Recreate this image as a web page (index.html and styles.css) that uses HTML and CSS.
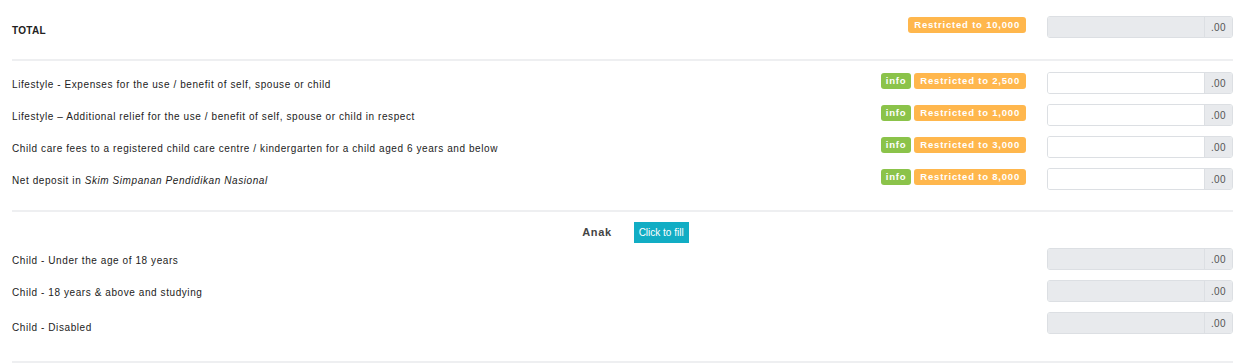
FILE: index.html
```html
<!doctype html>
<html lang="en">
  <head>
    <meta charset="UTF-8" />
    <title>Relief</title>
    <link rel="stylesheet" href="styles.css">
  </head>
  <body>
    <div class="form">
      <div class="row total-row">
        <div class="label total">TOTAL</div>
        <div class="badges"><span class="badge warn">Restricted to 10,000</span></div>
        <div class="amount readonly"><span class="field"></span><span class="addon">.00</span></div>
      </div>

      <hr class="divider first">

      <div class="row">
        <div class="label">Lifestyle - Expenses for the use / benefit of self, spouse or child</div>
        <div class="badges"><span class="badge ok">info</span><span class="badge warn">Restricted to 2,500</span></div>
        <div class="amount"><span class="field"></span><span class="addon">.00</span></div>
      </div>
      <div class="row">
        <div class="label">Lifestyle – Additional relief for the use / benefit of self, spouse or child in respect</div>
        <div class="badges"><span class="badge ok">info</span><span class="badge warn">Restricted to 1,000</span></div>
        <div class="amount"><span class="field"></span><span class="addon">.00</span></div>
      </div>
      <div class="row">
        <div class="label">Child care fees to a registered child care centre / kindergarten for a child aged 6 years and below</div>
        <div class="badges"><span class="badge ok">info</span><span class="badge warn">Restricted to 3,000</span></div>
        <div class="amount"><span class="field"></span><span class="addon">.00</span></div>
      </div>
      <div class="row">
        <div class="label">Net deposit in <em>Skim Simpanan Pendidikan Nasional</em></div>
        <div class="badges"><span class="badge ok">info</span><span class="badge warn">Restricted to 8,000</span></div>
        <div class="amount"><span class="field"></span><span class="addon">.00</span></div>
      </div>

      <hr class="divider mid">

      <div class="group-head">
        <span class="group-title">Anak</span>
        <button class="fill-btn">Click to fill</button>
      </div>

      <div class="row child">
        <div class="label">Child - Under the age of 18 years</div>
        <div class="badges"></div>
        <div class="amount readonly"><span class="field"></span><span class="addon">.00</span></div>
      </div>
      <div class="row child">
        <div class="label">Child - 18 years &amp; above and studying</div>
        <div class="badges"></div>
        <div class="amount readonly"><span class="field"></span><span class="addon">.00</span></div>
      </div>
      <div class="row child last">
        <div class="label">Child - Disabled</div>
        <div class="badges"></div>
        <div class="amount readonly"><span class="field"></span><span class="addon">.00</span></div>
      </div>

      <hr class="divider">
    </div>
  </body>
</html>
```

FILE: styles.css
```css
body {
  margin: 0;
  font-family: "Liberation Sans", Arial, sans-serif;
  font-size: 10px;
  color: #222;
  background: #fff;
}
.form {
  width: 1221px;
  padding: 16px 0 0 12px;
}
.row {
  display: grid;
  grid-template-columns: 1fr auto 186px;
  column-gap: 21px;
  align-items: center;
  height: 22px;
  margin-bottom: 10px;
}
.total-row {
  margin-bottom: 0;
}
.label {
  letter-spacing: 0.58px;
  white-space: nowrap;
  padding-top: 2px;
}
.total {
  font-weight: bold;
  letter-spacing: 0.3px;
  padding-top: 6px;
}
.badges {
  display: flex;
  gap: 3px;
  align-self: start;
  padding-top: 1px;
}
.badge {
  display: inline-block;
  height: 16px;
  line-height: 16px;
  padding: 0 6px;
  border-radius: 3px;
  color: #fff;
  font-weight: bold;
  font-size: 9.5px;
  letter-spacing: 0.8px;
}
.badge.warn {
  background: #ffb74d;
}
.badge.ok {
  background: #8bc34a;
  padding: 0 5px;
}
.amount {
  display: flex;
  height: 22px;
  border: 1px solid #dcdfe3;
  border-radius: 3px;
  box-sizing: border-box;
  overflow: hidden;
}
.field {
  flex: 1;
  background: #fff;
}
.amount.readonly .field {
  background: #e8eaed;
}
.addon {
  width: 27px;
  border-left: 1px solid #dcdfe3;
  background: #e8eaed;
  color: #555;
  font-size: 10px;
  letter-spacing: 0.4px;
  text-align: center;
  line-height: 21px;
}
.divider {
  border: 0;
  height: 2px;
  background: #eeeff1;
  margin: 0 0 10px 0;
}
.divider.first {
  margin-top: 21px;
  margin-bottom: 11px;
}
.divider.mid {
  margin-top: 20px;
  margin-bottom: 10px;
}
.group-head {
  display: flex;
  justify-content: center;
  align-items: flex-start;
  gap: 22px;
  height: 26px;
  padding-left: 26px;
}
.group-title {
  font-weight: bold;
  font-size: 11px;
  color: #444;
  letter-spacing: 0.6px;
  padding-top: 4px;
}
.fill-btn {
  height: 21px;
  padding: 0 5px;
  border: 0;
  background: #11adc4;
  color: #fff;
  font-family: "Liberation Sans", Arial, sans-serif;
  font-size: 10px;
}
.row.child.last {
  margin-top: 1px;
  margin-bottom: 27px;
}
.row.child.last .label {
  padding-top: 8px;
}
```
